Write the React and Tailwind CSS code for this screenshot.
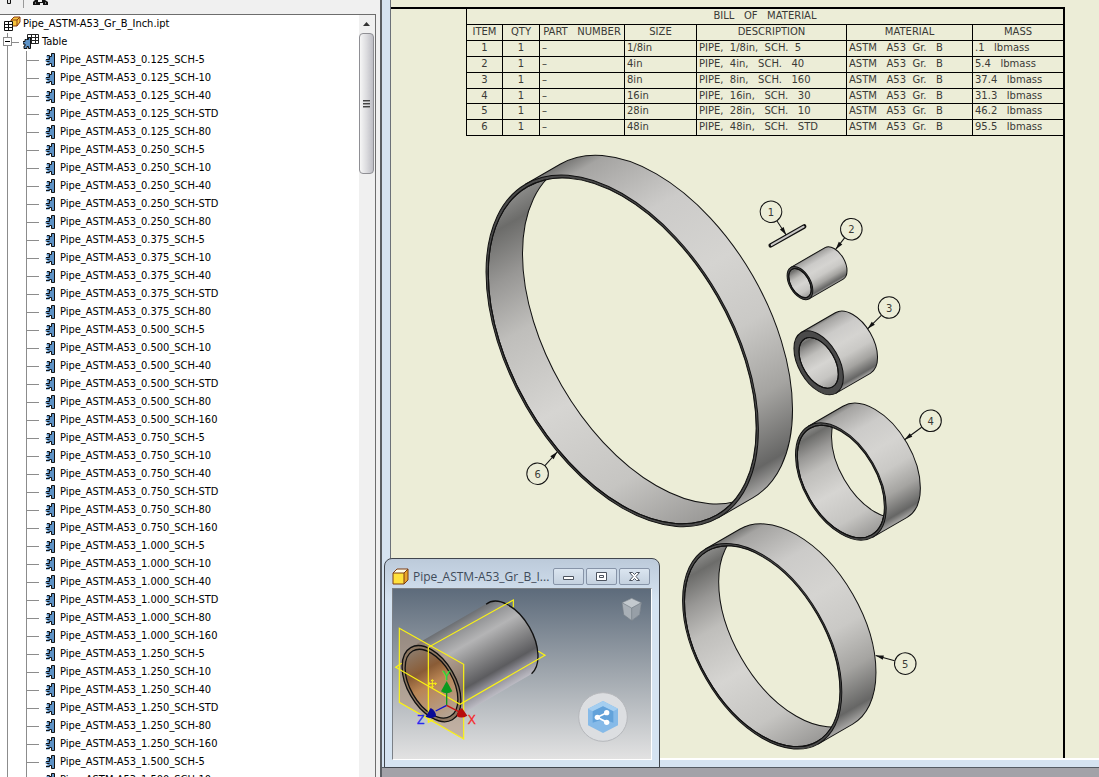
import React from 'react';

const SCHEDULES = [
  ['0.125', ['5', '10', '40', 'STD', '80']],
  ['0.250', ['5', '10', '40', 'STD', '80']],
  ['0.375', ['5', '10', '40', 'STD', '80']],
  ['0.500', ['5', '10', '40', 'STD', '80', '160']],
  ['0.750', ['5', '10', '40', 'STD', '80', '160']],
  ['1.000', ['5', '10', '40', 'STD', '80', '160']],
  ['1.250', ['5', '10', '40', 'STD', '80', '160']],
  ['1.500', ['5', '10']],
];

const MEMBERS = SCHEDULES.flatMap(([size, list]) =>
  list.map((sch) => `Pipe_ASTM-A53_${size}_SCH-${sch}`)
);

const BOM_ROWS = [
  ['1', '1', '–', '1/8in', 'PIPE,  1/8in,  SCH.  5', 'ASTM   A53  Gr.   B', '.1   lbmass'],
  ['2', '1', '–', '4in', 'PIPE,  4in,   SCH.   40', 'ASTM   A53  Gr.   B', '5.4   lbmass'],
  ['3', '1', '–', '8in', 'PIPE,  8in,   SCH.   160', 'ASTM   A53  Gr.   B', '37.4   lbmass'],
  ['4', '1', '–', '16in', 'PIPE,  16in,   SCH.   30', 'ASTM   A53  Gr.   B', '31.3   lbmass'],
  ['5', '1', '–', '28in', 'PIPE,  28in,   SCH.   10', 'ASTM   A53  Gr.   B', '46.2   lbmass'],
  ['6', '1', '–', '48in', 'PIPE,  48in,   SCH.   STD', 'ASTM   A53  Gr.   B', '95.5   lbmass'],
];

// a = long half axis of the end face, inner = long half axis of the bore
const PIPES = [
  { id: 6, cx: 622.4, cy: 350, a: 192.8, inner: 189.6 },
  { id: 2, cx: 800.3, cy: 282.2, a: 18.2, inner: 15.9 },
  { id: 3, cx: 819, cy: 362, a: 35, inner: 27.8 },
  { id: 4, cx: 841.2, cy: 480.8, a: 64.2, inner: 61.6 },
  { id: 5, cx: 762.5, cy: 645.7, a: 112.7, inner: 110 },
];

const BALLOONS = [
  { id: 1, x: 771.3, y: 210.8, tx: 786.5, ty: 234 },
  { id: 2, x: 851.7, y: 228.3, tx: 836, ty: 248.5 },
  { id: 3, x: 889.5, y: 306.7, tx: 868, ty: 328 },
  { id: 4, x: 931, y: 420, tx: 905, ty: 439 },
  { id: 5, x: 905.7, y: 663, tx: 876, ty: 655 },
  { id: 6, x: 537.7, y: 473, tx: 557.5, ty: 451 },
];

/* ===== ICONS ===== */

const MemberIcon = () => (
  <svg width="11" height="14" viewBox="0 0 11 14" className="shrink-0">
    <path d="M6.500 3.500V.5h3v13h-3v-3h-2v2h-3.500v-2h1.500v-2h-2v-2h2v-2h-1v-2h2.500v1z" fill="#5d92c6" />
    <path d="M6.500 3.500V.5h3v13h-3v-3M6.500 3.500H4.500v-1H2M6.500 10.500H4.500v1H1M4.500 6.500H1M4.500 8.500H1.500M4.500 3.500v3" fill="none" stroke="#111" />
  </svg>
);

const TableIcon = () => (
  <svg width="16" height="16" viewBox="0 0 16 16" className="shrink-0">
    <path d="M4.500.5h11v9h-11zM4.500 3.500h11M4.500 6.500h11M8.500.5v9M12.500.5v9" fill="#fff" stroke="#222" />
    <path d="M5.500 5.500v-2h2v11h-2v-2h-1.500v2h-3v-2.500h1v-2h-2v-2.500h2v-2h1.500v0z" fill="#5d92c6" stroke="#111" />
  </svg>
);

const PartIcon = () => (
  <svg width="17" height="17" viewBox="0 0 17 17" className="shrink-0">
    <path d="M7 4l3-3h6v5l-3 4H7z" fill="#f6c43c" stroke="#8a3c10" />
    <path d="M7 4h6v6M13 4l3-3" fill="none" stroke="#8a3c10" />
    <path d="M.5 5.500h8v9h-8zM.5 8.500h8M.5 11.500h8M4.500 5.500v9" fill="#fff" stroke="#111" />
  </svg>
);

const CubeIcon = () => (
  <svg width="17" height="17" viewBox="0 0 17 17" className="shrink-0">
    <path d="M1 5l4-4h11v11l-4 4H1z" fill="#ffe13c" />
    <path d="M1 5l4-4h11l-4 4z" fill="#fffbe6" />
    <path d="M12 5l4-4v11l-4 4z" fill="#e8a42a" />
    <path d="M1 5l4-4h11v11l-4 4H1zM1 5h11v11M12 5l4-4" fill="none" stroke="#7c3d12" />
  </svg>
);

/* ===== MODEL TREE ===== */

const Toolbar = () => (
  <div className="h-[14px] shrink-0 overflow-hidden bg-[#f0f0f0]">
    <svg width="60" height="14" viewBox="0 0 60 14">
      <path d="M7.500 0v3.500h3V0" fill="#ddd" stroke="#111" />
      <path d="M23.500 0v8" stroke="#999" />
      <path d="M33 5V2l2-2h3v2h4V0h3l3 2v3h-5V3h-3v2z" fill="#111" />
      <path d="M35 3h1M45 3h1" stroke="#ddd" />
    </svg>
  </div>
);

const ScrollBar = () => (
  <div className="flex w-4 shrink-0 flex-col bg-[#f0f0f0] pr-px">
    <button aria-label="Scroll up" className="flex h-[18px] items-center justify-center">
      <svg width="7" height="4" viewBox="0 0 7 4">
        <path d="M0 4l3.500-4L7 4z" fill="#333" />
      </svg>
    </button>
    <div className="flex h-[141px] flex-col items-center justify-center gap-px rounded-sm border border-[#8f8f94] bg-linear-to-r from-[#f6f6f6] via-[#dcdcdf] to-[#bdbdc4]">
      <div className="h-0.5 w-[7px] border-t border-[#444] bg-[#999]" />
      <div className="h-0.5 w-[7px] border-t border-[#444] bg-[#999]" />
      <div className="h-0.5 w-[7px] border-t border-[#444] bg-[#999]" />
    </div>
  </div>
);

const ModelTree = () => (
  <div className="flex w-[376px] shrink-0 flex-col">
    <Toolbar />
    <div className="flex min-h-0 flex-1 border-t border-r border-[#6d6d6d] bg-white">
      <div className="min-w-0 flex-1 overflow-hidden font-['DejaVu_Sans_Condensed','DejaVu_Sans',sans-serif] text-[11px] leading-[18px] text-black [font-stretch:condensed]">
        <div className="flex h-[18px] items-center gap-0.5 pl-1">
          <PartIcon />
          Pipe_ASTM-A53_Gr_B_Inch.ipt
        </div>
        <div className="flex">
          <div className="flex w-3 shrink-0 flex-col items-center pl-[3px]">
            <div className="h-1 w-px bg-[#8c8c8c]" />
            <button
              aria-label="Collapse Table"
              className="flex h-[9px] w-[9px] items-center justify-center border border-[#8c8c8c] bg-white"
            >
              <span className="h-px w-[5px] bg-black" />
            </button>
            <div className="w-px flex-1 bg-[#8c8c8c]" />
          </div>
          <div>
            <div className="flex h-[18px] items-center">
              <span className="mr-1 h-px w-[7px] bg-[#8c8c8c]" />
              <TableIcon />
              <span className="ml-[3px]">Table</span>
            </div>
            <ul className="ml-[14px] border-l border-[#8c8c8c]">
              {MEMBERS.map((name) => (
                <li key={name} className="flex h-[18px] items-center whitespace-nowrap">
                  <span className="mr-1.5 h-px w-3 bg-[#8c8c8c]" />
                  <MemberIcon />
                  <span className="ml-1">{name}</span>
                </li>
              ))}
            </ul>
          </div>
        </div>
      </div>
      <ScrollBar />
    </div>
  </div>
);

/* ===== DRAWING SHEET ===== */

const BomTable = () => (
  <table className="ml-auto w-[597px] table-fixed border-collapse font-['DejaVu_Sans',sans-serif] text-[10px] leading-[14px] whitespace-pre text-[#3a3a36] [&_td]:border-b [&_td]:border-l [&_td]:border-black [&_td]:px-0.5 [&_td]:py-0 [&_th]:border-b [&_th]:border-l [&_th]:border-black [&_th]:p-0 [&_th]:font-normal">
    <colgroup>
      <col className="w-9" />
      <col className="w-[37px]" />
      <col className="w-[85px]" />
      <col className="w-[72px]" />
      <col className="w-[150px]" />
      <col className="w-[126px]" />
      <col />
    </colgroup>
    <thead>
      <tr className="h-[15px]">
        <th colSpan={7}>BILL   OF   MATERIAL</th>
      </tr>
      <tr className="h-4">
        <th>ITEM</th>
        <th>QTY</th>
        <th>PART   NUMBER</th>
        <th>SIZE</th>
        <th>DESCRIPTION</th>
        <th>MATERIAL</th>
        <th>MASS</th>
      </tr>
    </thead>
    <tbody>
      {BOM_ROWS.map((row) => (
        <tr key={row[0]} className="h-4 nth-[4n]:h-[15px]">
          {row.map((cell, i) => (
            <td key={i} className={i < 2 ? 'text-center' : 'text-left'}>
              {cell}
            </td>
          ))}
        </tr>
      ))}
    </tbody>
  </table>
);

// Drawn with x along the pipe axis, then turned 30 degrees
const Pipe = ({ id, cx, cy, a, inner }) => {
  const length = 39.5;
  const k = 0.577;
  return (
    <g transform={`translate(${cx} ${cy}) rotate(-30)`} stroke="#111">
      <clipPath id={`bore${id}`}>
        <ellipse rx={inner * k} ry={inner} />
      </clipPath>
      <path
        d={`M0 ${-a}H${length}A${a * k} ${a} 0 0 1 ${length} ${a}H0z`}
        fill="url(#outside)"
      />
      <ellipse rx={a * k} ry={a} fill="#4a4a4a" />
      <ellipse rx={inner * k} ry={inner} fill="url(#inside)" />
      <g clipPath={`url(#bore${id})`}>
        <ellipse cx={length} rx={inner * k} ry={inner} fill="#ecedd7" />
      </g>
      <ellipse rx={inner * k} ry={inner} fill="none" />
    </g>
  );
};

const Balloon = ({ id, x, y, tx, ty }) => {
  const len = Math.hypot(tx - x, ty - y);
  const angle = (Math.atan2(ty - y, tx - x) * 180) / Math.PI;
  return (
    <g>
      <g transform={`translate(${x} ${y}) rotate(${angle})`}>
        <circle r="10.800" fill="none" stroke="#111" />
        <path d={`M11 0H${len}`} stroke="#111" />
        <path d={`M${len} 0l-8 -2.200v4.400z`} fill="#111" />
      </g>
      <text x={x} y={y + 4} textAnchor="middle" className="fill-[#3a3a36] font-['DejaVu_Sans',sans-serif] text-[10px]">
        {id}
      </text>
    </g>
  );
};

const PipeDrawing = () => (
  <svg viewBox="391 135 672 623" preserveAspectRatio="xMinYMin meet" className="block min-h-0 w-full flex-1">
    <defs>
      <linearGradient id="outside" x1="0" y1="0" x2="0" y2="1">
        <stop offset="0" stopColor="#777775" />
        <stop offset="0.04" stopColor="#a5a4a2" />
        <stop offset="0.22" stopColor="#cccbc9" />
        <stop offset="0.42" stopColor="#d5d4d1" />
        <stop offset="0.6" stopColor="#cac9c6" />
        <stop offset="0.78" stopColor="#a5a4a1" />
        <stop offset="0.94" stopColor="#666665" />
        <stop offset="1" stopColor="#aaa9a7" />
      </linearGradient>
      <linearGradient id="inside" x1="0" y1="0" x2="0" y2="1">
        <stop offset="0" stopColor="#8a8a88" />
        <stop offset="0.06" stopColor="#6c6c6a" />
        <stop offset="0.18" stopColor="#989795" />
        <stop offset="0.32" stopColor="#bfbebb" />
        <stop offset="0.55" stopColor="#d6d5d2" />
        <stop offset="0.8" stopColor="#c6c5c2" />
        <stop offset="1" stopColor="#9a9997" />
      </linearGradient>
    </defs>
    {PIPES.map((pipe) => (
      <Pipe key={pipe.id} {...pipe} />
    ))}
    <path d="M771 244.500l33.500-19" stroke="#111" strokeWidth="4.500" strokeLinecap="round" />
    <path d="M772 244l32-18.200" stroke="#c9c8c6" strokeWidth="2" strokeLinecap="round" />
    {BALLOONS.map((balloon) => (
      <Balloon key={balloon.id} {...balloon} />
    ))}
  </svg>
);

const DrawingSheet = () => (
  <div className="flex min-h-0 flex-1 border-b border-[#555b63]">
    <div className="w-2 shrink-0 bg-[#d5e3f1]" />
    <div className="flex min-w-0 flex-1 flex-col border-l border-[#6b7178] bg-[#ecedd7]">
      <div className="mt-[7px] mr-[34px] flex min-h-0 flex-1 flex-col border-t-2 border-r-2 border-black">
        <BomTable />
        <PipeDrawing />
      </div>
      <div className="h-[9px] shrink-0 border-t-2 border-white bg-[#d5e3f1]" />
    </div>
  </div>
);

/* ===== PART WINDOW ===== */

const WindowButton = ({ label, children }) => (
  <button
    aria-label={label}
    className="flex h-[17px] w-[31px] items-center justify-center rounded-xs border border-[#8794a8] bg-linear-to-b from-[#dbe5f0] to-[#c4d1df]"
  >
    <svg width="13" height="11" viewBox="0 0 13 11" fill="#fff" stroke="#4c535f">
      {children}
    </svg>
  </button>
);

const PartView = () => (
  <svg viewBox="39 117 774 510" className="block h-[170px] w-full">
    <defs>
      <linearGradient id="sky" x1="0" y1="0" x2="0" y2="1">
        <stop offset="0" stopColor="#5d6b7b" />
        <stop offset="0.5" stopColor="#a0a7ae" />
        <stop offset="1" stopColor="#e2e2e2" />
      </linearGradient>
      <linearGradient id="steel" x1="0" y1="0" x2="0" y2="1">
        <stop offset="0" stopColor="#6c6f73" />
        <stop offset="0.12" stopColor="#939496" />
        <stop offset="0.3" stopColor="#b4b4b5" />
        <stop offset="0.5" stopColor="#8c8c8d" />
        <stop offset="0.75" stopColor="#5c5c5f" />
        <stop offset="0.86" stopColor="#8e8d95" />
        <stop offset="1" stopColor="#bcbbc3" />
      </linearGradient>
      <linearGradient id="bore" x1="0" y1="0" x2="0" y2="1">
        <stop offset="0" stopColor="#8d7a69" />
        <stop offset="0.3" stopColor="#8a5c36" />
        <stop offset="0.5" stopColor="#b98554" />
        <stop offset="1" stopColor="#b5a495" />
      </linearGradient>
    </defs>
    <rect x="39" y="117" width="774" height="510" fill="url(#sky)" />

    <g transform="translate(154.500 401) rotate(-30)">
      <path d="M0 -125H267A72 125 0 0 1 267 125H0z" fill="url(#steel)" />
      <path d="M261 -124.500A72 125 0 0 1 339 0A72 125 0 0 1 275 124" fill="none" stroke="#111" strokeWidth="4" />
    </g>
    <path d="M58 235L251 343V567L58 457z" fill="#b48c6a" fillOpacity="0.450" />
    <g transform="translate(154.500 401) rotate(-30)">
      <ellipse rx="72" ry="125" fill="#8d7762" stroke="#111" strokeWidth="4" />
      <ellipse rx="64" ry="113" fill="url(#bore)" stroke="#111" strokeWidth="4" />
    </g>

    {/* work planes */}
    <g fill="none" stroke="#fbf312" strokeWidth="3.500">
      <path d="M58 235L251 343V567L58 457z" />
      <path d="M400 172V150L145 292V517L160 509" />
      <path d="M65 340L47 352L240 463L495 316L475 304" />
      <path d="M157 389v24M145 401h24M153 393l4-4 4 4M153 409l4 4 4-4M149 397l-4 4 4 4M165 397l4 4-4 4" strokeWidth="3" />
    </g>

    {/* axis triad */}
    <path d="M200 466V424" stroke="#0a9a1c" strokeWidth="4" />
    <path d="M200 393L183 424q17 12 34 0z" fill="#0c9a1e" />
    <path d="M200 466L167 483" stroke="#1414c8" strokeWidth="4" />
    <path d="M137 500L152 474q16 8 16 25q-14 10-31 1z" fill="#0a0a96" />
    <path d="M200 466L236 485" stroke="#c81414" strokeWidth="4" />
    <path d="M262 497L246 474q-14 8-16 24q14 10 32-1z" fill="#b80c0c" />
    <g textAnchor="middle" fontSize="36" className="font-['Liberation_Sans',sans-serif]">
      <text x="199" y="389" fill="#22e03a" stroke="#22e03a">Y</text>
      <text x="275" y="523" fill="#f52828" stroke="#f52828">X</text>
      <text x="122" y="523" fill="#2828f0" stroke="#2828f0">Z</text>
    </g>

    {/* view cube */}
    <path d="M755 145L784 158L779 194L755 212L731 194L726 158z" fill="#a9b0b7" />
    <path d="M755 145L784 158L755 174L726 158z" fill="#c3c9ce" />
    <path d="M755 174L784 158L779 194L755 212z" fill="#979fa7" />
    <path d="M755 145L784 158L779 194L755 212L731 194L726 158zM726 158L755 174L784 158M755 174V212" fill="none" stroke="#727b85" strokeWidth="2" />

    {/* share badge */}
    <circle cx="669" cy="501" r="73" fill="#dcdee1" stroke="#b6b8bc" strokeWidth="3" />
    <path d="M669 453L714 476V526L669 549L624 526V476z" fill="#86bae8" />
    <path d="M669 453L714 476L700 484L669 469L638 484L624 476z" fill="#a4cef0" />
    <path d="M669 469L700 484V518L669 508L638 518V484z" fill="#62a2da" />
    <path d="M680 488L652 502L680 517" fill="none" stroke="#fff" strokeWidth="5" />
    <g fill="#fff">
      <circle cx="680" cy="488" r="8" />
      <circle cx="652" cy="502" r="8" />
      <circle cx="680" cy="517" r="8" />
    </g>
  </svg>
);

const PartWindow = () => (
  <div className="absolute bottom-[9px] left-[2px] w-[276px] rounded-t-lg border border-[#41464d] bg-[#d5e3f1] bg-linear-to-b from-[#bccada] to-[#d5e3f1] to-20% px-[7px] pb-[7px]">
    <div className="flex h-[29px] items-center gap-1 pt-1.5 pr-0.5">
      <CubeIcon />
      <span className="min-w-0 flex-1 whitespace-nowrap font-['Open_Sans','Noto_Sans',sans-serif] text-xs text-[#3f4b5a]">
        Pipe_ASTM-A53_Gr_B_I...
      </span>
      <div className="flex gap-0.5">
        <WindowButton label="Minimize">
          <path d="M1.500 5.500h10v3h-10z" />
        </WindowButton>
        <WindowButton label="Maximize">
          <path d="M1.500 1.500h10v8h-10zM4.500 4.500h4v2h-4z" />
        </WindowButton>
        <WindowButton label="Close">
          <path d="M1.500 1.500h3l2 2 2-2h3l-3.500 4 3.500 4h-3l-2-2-2 2h-3l3.500-4z" />
        </WindowButton>
      </div>
    </div>
    <div className="border border-t-[#7b8086] border-r-white border-b-white border-l-[#7b8086]">
      <PartView />
    </div>
  </div>
);

export default function App() {
  return (
    <div className="flex h-screen overflow-hidden bg-[#f0f0f0]">
      <ModelTree />
      <div className="relative ml-1 flex min-w-0 flex-1 flex-col border-l-2 border-[#5a5e63]">
        <DrawingSheet />
        <div className="h-[9px] shrink-0 bg-[#a2a2a8]" />
        <PartWindow />
      </div>
    </div>
  );
}
